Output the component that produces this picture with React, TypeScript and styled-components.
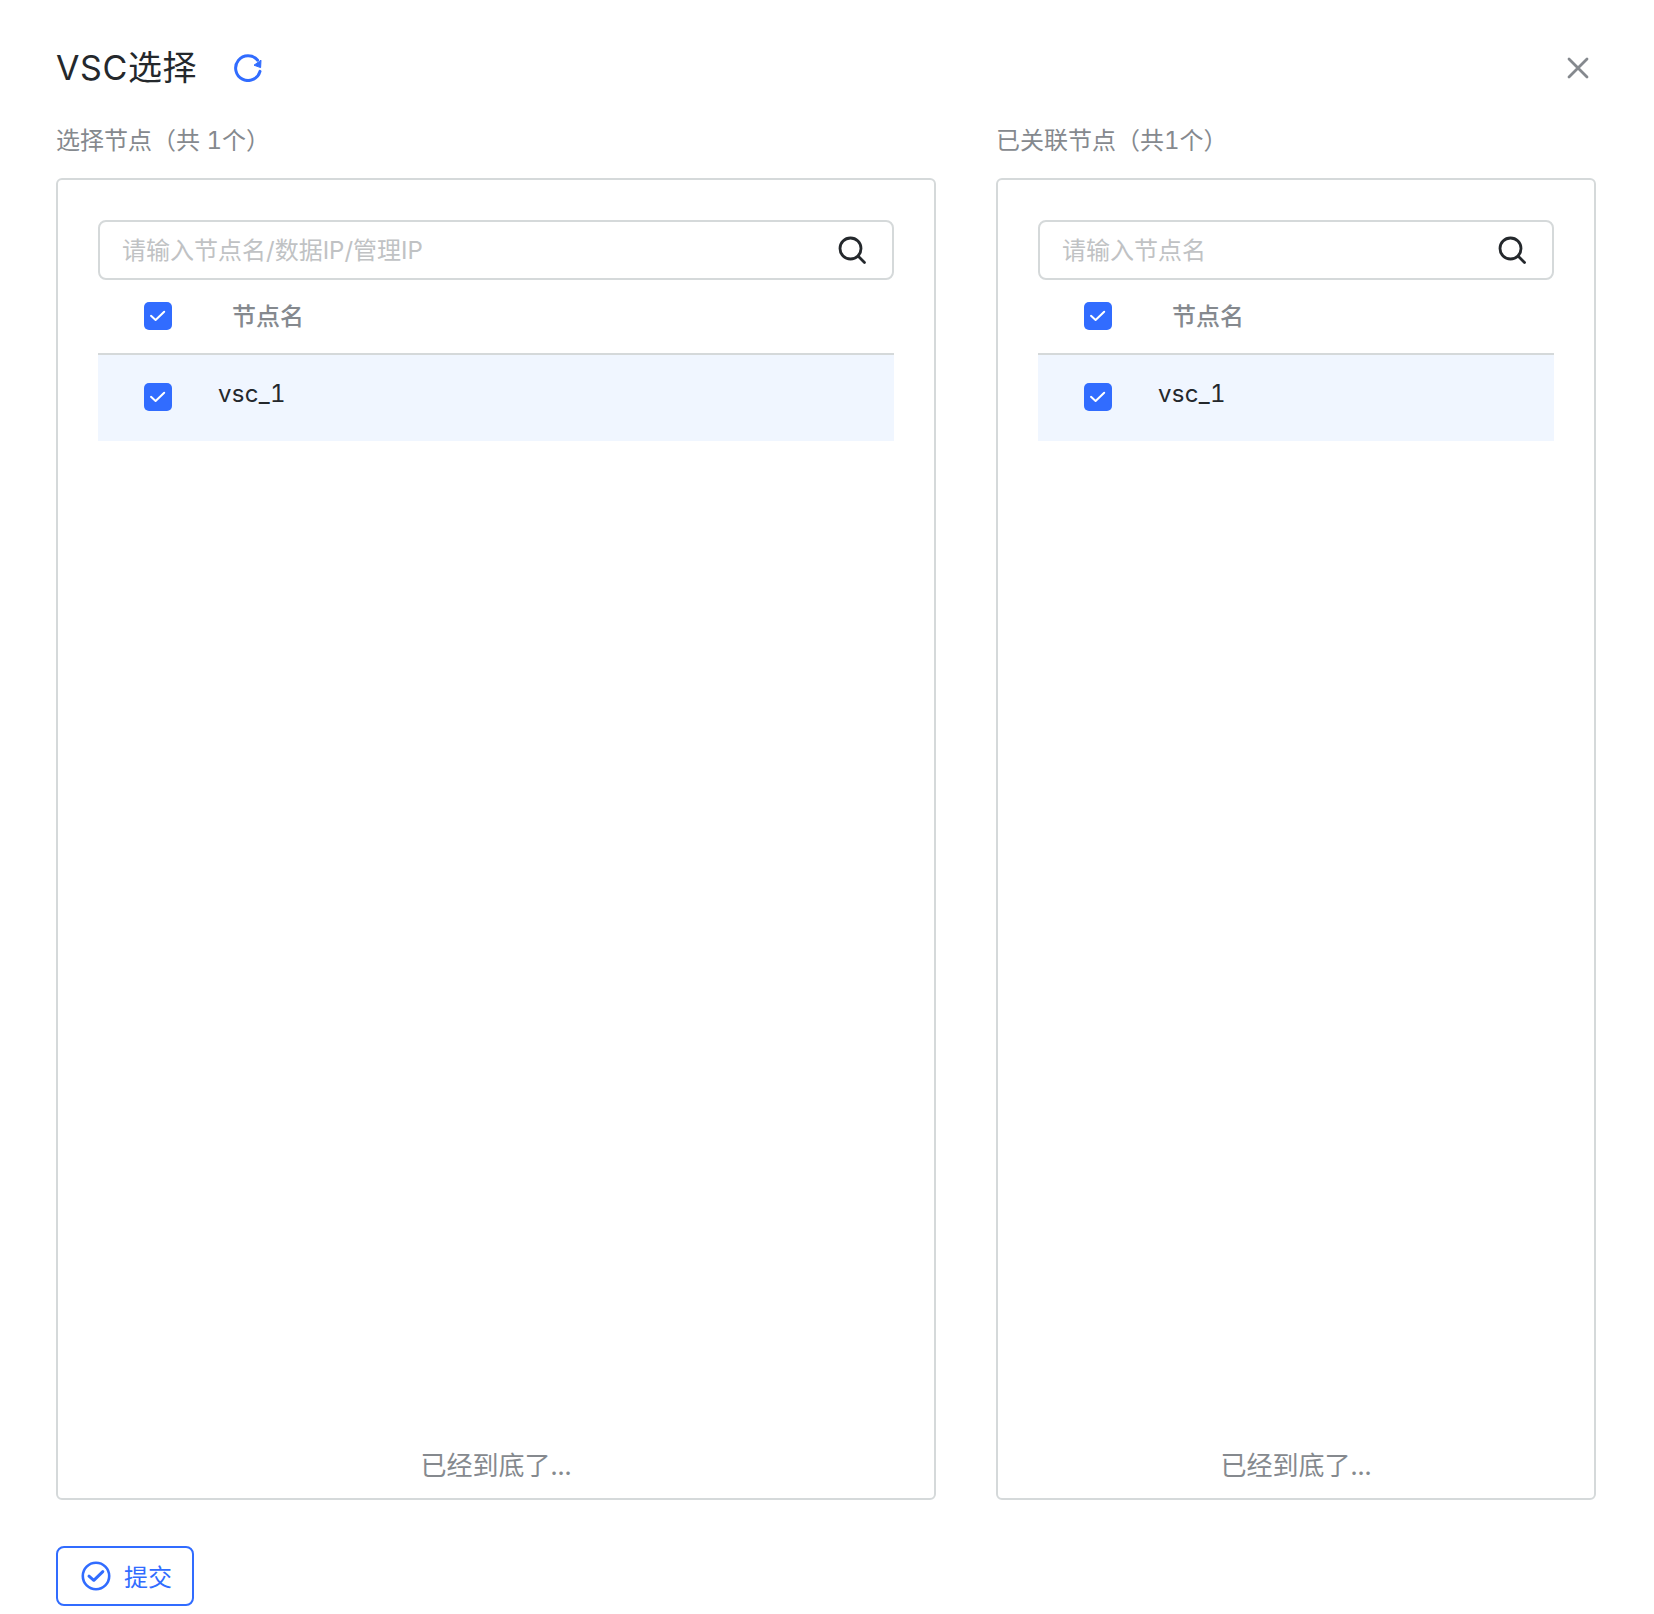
import React from 'react';
import styled, { createGlobalStyle } from 'styled-components';

const BLUE = '#316cff';
const BORDER = '#d5d9da';

const GlobalStyle = createGlobalStyle`
	html, body {
		margin: 0;
		padding: 0;
		background: #fff;
	}
	* {
		box-sizing: border-box;
	}
	body {
		font-family: Inter, 'Noto Sans CJK SC', sans-serif;
		font-feature-settings: 'tnum';
	}
`;

type Column = {
	label: string;
	placeholder: string;
};

const columns: Column[] = [
	{ label: '选择节点（共 1个）', placeholder: '请输入节点名/数据IP/管理IP' },
	{ label: '已关联节点（共1个）', placeholder: '请输入节点名' },
];

const CheckBox = () => (
	<Check>
		<svg width="28" height="28" viewBox="0 0 28 28" fill="none">
			<path d="M7 13.8L11.6 18L20.2 9.8" stroke="#fff" strokeWidth="2" strokeLinecap="round" strokeLinejoin="round" />
		</svg>
	</Check>
);

const NodePanel = ({ label, placeholder }: Column) => (
	<PanelColumn>
		<PanelLabel>{label}</PanelLabel>
		<Panel>
			<SearchBox>
				<SearchInput placeholder={placeholder} readOnly />
				<svg width="30" height="30" viewBox="0 0 30 30" fill="none">
					<circle cx="13.5" cy="13.5" r="10.5" stroke="#24282c" strokeWidth="2.8" />
					<path d="M21.5 21.5L27.5 27.5" stroke="#24282c" strokeWidth="2.8" strokeLinecap="round" />
				</svg>
			</SearchBox>
			<HeadRow>
				<CheckBox />
				<HeadText>节点名</HeadText>
			</HeadRow>
			<NodeRow>
				<CheckBox />
				<NodeName>vsc_1</NodeName>
			</NodeRow>
			<Spacer />
			<EndText>已经到底了...</EndText>
		</Panel>
	</PanelColumn>
);

export default function App() {
	return (
		<Page>
			<GlobalStyle />
			<Header>
				<TitleGroup>
					<Title>VSC选择</Title>
					<svg width="30" height="30" viewBox="0 0 30 30" fill="none">
						<path d="M24.6 8.2A12.4 12.4 0 1 0 27 19.4" stroke={BLUE} strokeWidth="3" strokeLinecap="round" />
						<path d="M21 13.2L27.6 15.6L28 8.2Z" fill={BLUE} stroke={BLUE} strokeLinejoin="round" />
					</svg>
				</TitleGroup>
				<svg width="22" height="22" viewBox="0 0 22 22" fill="none">
					<path d="M2 2L20 20M20 2L2 20" stroke="#85898e" strokeWidth="2.8" strokeLinecap="round" />
				</svg>
			</Header>
			<Columns>
				{columns.map((column) => (
					<NodePanel key={column.label} {...column} />
				))}
			</Columns>
			<SubmitButton>
				<svg width="30" height="30" viewBox="0 0 30 30" fill="none">
					<circle cx="15" cy="15" r="13.2" stroke={BLUE} strokeWidth="2.6" />
					<path d="M8 15.2L12.8 19.3L21.8 10.6" stroke={BLUE} strokeWidth="3" strokeLinecap="round" strokeLinejoin="round" />
				</svg>
				<SubmitText>提交</SubmitText>
			</SubmitButton>
		</Page>
	);
}

const Page = styled.div`
	display: flex;
	flex-direction: column;
	align-items: flex-start;
	width: 1654px;
	height: 1614px;
	padding: 38px 58px 8px 56px;
	background: #fff;
`;
const Header = styled.div`
	display: flex;
	width: 100%;
	height: 60px;
	align-items: center;
	justify-content: space-between;
	padding-right: 7px;
`;
const TitleGroup = styled.div`
	display: flex;
	align-items: center;
	gap: 36px;

	svg {
		margin-top: -2px;
	}
`;
const Title = styled.h1`
	margin: 0;
	color: #24282c;
	font-size: 34px;
	font-weight: 400;
	letter-spacing: 0.6px;
	line-height: 60px;
`;
const Columns = styled.div`
	display: grid;
	grid-template-columns: 880px 600px;
	column-gap: 60px;
	width: 100%;
	margin-top: 27px;
`;
const PanelColumn = styled.section`
	display: flex;
	flex-direction: column;
`;
const PanelLabel = styled.div`
	height: 32px;
	margin-bottom: 21px;
	color: #85898e;
	font-size: 24px;
	line-height: 32px;
`;
const Panel = styled.div`
	display: flex;
	flex-direction: column;
	height: 1322px;
	padding: 40px 40px 16px;
	border: 2px solid ${BORDER};
	border-radius: 6px;
`;
const SearchBox = styled.div`
	display: flex;
	flex: none;
	height: 60px;
	align-items: center;
	padding: 0 25px 0 22px;
	border: 2px solid ${BORDER};
	border-radius: 8px;
`;
const SearchInput = styled.input`
	flex: 1;
	min-width: 0;
	padding: 0;
	border: none;
	outline: none;
	background: transparent;
	color: #24282c;
	font-family: inherit;
	font-size: 24px;

	&::placeholder {
		color: #c0c2c4;
		opacity: 1;
	}
`;
const HeadRow = styled.div`
	display: flex;
	flex: none;
	height: 75px;
	align-items: center;
	gap: 60px;
	padding: 0 0 2px 46px;
	border-bottom: 2px solid ${BORDER};
`;
const HeadText = styled.span`
	margin-top: -2px;
	color: #85898e;
	font-size: 24px;
	font-weight: 500;
`;
const NodeRow = styled.div`
	display: flex;
	flex: none;
	height: 86px;
	align-items: center;
	gap: 46px;
	padding: 0 0 2px 46px;
	background: #f0f6ff;
`;
const NodeName = styled.span`
	margin-top: -7px;
	color: #24282c;
	font-size: 24px;
	letter-spacing: 0.3px;
`;
const Check = styled.span`
	display: flex;
	flex: none;
	width: 28px;
	height: 28px;
	align-items: center;
	justify-content: center;
	border-radius: 5px;
	background: ${BLUE};
`;
const Spacer = styled.div`
	flex: 1;
`;
const EndText = styled.div`
	color: #85898e;
	font-size: 26px;
	line-height: 32px;
	text-align: center;
`;
const SubmitButton = styled.button`
	display: flex;
	width: 138px;
	height: 60px;
	align-items: center;
	gap: 13px;
	margin-top: 46px;
	padding: 0 0 0 23px;
	border: 2px solid ${BLUE};
	border-radius: 8px;
	background: #fff;
	color: ${BLUE};
	font-family: inherit;
	font-size: 24px;
	cursor: pointer;
`;
const SubmitText = styled.span`
	margin-top: -2px;
`;
